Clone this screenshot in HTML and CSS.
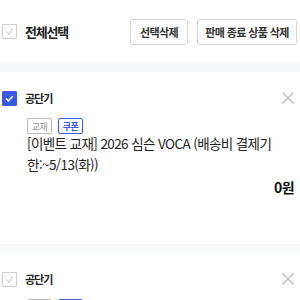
FILE: index.html
```html
<!DOCTYPE html>
<html lang="ko">
<head>
<meta charset="utf-8">
<link rel="stylesheet" href="styles.css">
</head>
<body>
<div class="header">
  <label class="check-all">
    <span class="cb"><svg viewBox="0 0 15 15" width="15" height="15"><path d="M3.5 7.5l3 3 5-6" fill="none" stroke="#c8c8c8" stroke-width="1.2"/></svg></span>
    <span class="all-label">전체선택</span>
  </label>
  <div class="actions">
    <button class="btn btn-sel">선택삭제</button>
    <button class="btn btn-end">판매 종료 상품 삭제</button>
  </div>
</div>
<div class="band"></div>
<div class="item">
  <div class="item-top">
    <span class="cb cb-on"><svg viewBox="0 0 15 15" width="15" height="15"><path d="M3.6 7.6l2.6 2.6 5-5.4" fill="none" stroke="#fff" stroke-width="1.8"/></svg></span>
    <span class="seller">공단기</span>
    <svg class="close" viewBox="0 0 12 12" width="12" height="12"><path d="M0.5 0.5l11 11M11.5 0.5l-11 11" stroke="#b5b5b5" stroke-width="1.1"/></svg>
  </div>
  <div class="item-body">
    <div class="tags">
      <span class="tag tag-gray">교재</span>
      <span class="tag tag-blue">쿠폰</span>
    </div>
    <p class="title">[이벤트 교재] 2026 심슨 VOCA (배송비 결제기한:~5/13(화))</p>
    <div class="price">0원</div>
  </div>
</div>
<div class="band"></div>
<div class="item">
  <div class="item-top">
    <span class="cb"><svg viewBox="0 0 15 15" width="15" height="15"><path d="M3.5 7.5l3 3 5-6" fill="none" stroke="#c8c8c8" stroke-width="1.2"/></svg></span>
    <span class="seller">공단기</span>
    <svg class="close" viewBox="0 0 12 12" width="12" height="12"><path d="M0.5 0.5l11 11M11.5 0.5l-11 11" stroke="#b5b5b5" stroke-width="1.1"/></svg>
  </div>
  <div class="item-body">
    <div class="tags">
      <span class="tag tag-gray">교재</span>
      <span class="tag tag-blue">쿠폰</span>
    </div>
  </div>
</div>
</body>
</html>
```
FILE: styles.css
```css
* { box-sizing: border-box; }
html, body { margin: 0; padding: 0; background: #fff; }
body {
  font-family: "Noto Sans CJK KR", "Noto Sans", sans-serif;
  color: #222;
  width: 300px;
  height: 300px;
  overflow: hidden;
}
.header {
  height: 63px;
  display: flex;
  align-items: center;
  justify-content: space-between;
  padding: 0 3px 0 2px;
}
.check-all { display: flex; align-items: center; }
.cb {
  width: 15px; height: 15px;
  border: 1px solid #cfcfcf;
  border-radius: 1px;
  display: inline-flex;
  align-items: center;
  justify-content: center;
  background: #fff;
  flex: none;
}
.cb svg { display: block; }
.cb-on { background: #3a5be0; border-color: #3a5be0; }
.all-label { margin-left: 8px; font-size: 13px; font-weight: 700; color: #222; letter-spacing: -1.2px; }
.actions { display: flex; gap: 9px; }
.btn {
  height: 26px;
  border: 1px solid #d6d6d6;
  border-radius: 3px;
  background: #fff;
  font-family: inherit;
  font-size: 11px;
  font-weight: 700;
  color: #333;
  padding: 0;
  letter-spacing: -0.6px;
}
.btn-sel { width: 58px; }
.btn-end { width: 100px; }
.band { height: 9px; background: #f7f8fa; }
.item { padding: 18px 6px 47px 2px; }
.item-top { display: flex; align-items: center; }
.seller { margin-left: 8px; font-size: 11px; font-weight: 700; color: #222; letter-spacing: -1px; }
.close { margin-left: auto; display: block; margin-right: 0; }
.item-body { padding-left: 25px; }
.tags { display: flex; gap: 6px; margin-top: 12px; }
.tag {
  height: 16px;
  width: 25px;
  display: inline-flex;
  align-items: center;
  justify-content: center;
  font-size: 9px;
  border: 1px solid;
  border-radius: 2px;
  letter-spacing: -0.5px;
}
.tag-gray { color: #999; border-color: #bbb; }
.tag-blue { color: #3a5be0; border-color: #3a5be0; font-weight: 700; }
.title {
  margin: -1px 0 0;
  font-size: 13.5px;
  line-height: 21px;
  color: #222;
  padding-right: 4px;
  letter-spacing: -0.6px;
}
.price {
  text-align: right;
  font-size: 14px;
  font-weight: 700;
  color: #111;
  margin-top: 2px;
  letter-spacing: -0.6px;
}
```
